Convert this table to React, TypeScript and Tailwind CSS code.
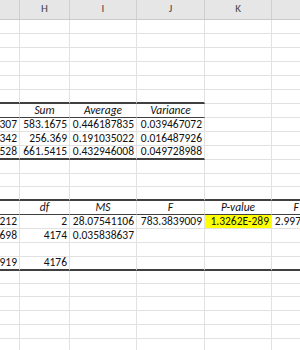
import React from "react";

const WC = ["w-[20px]", "w-[50px]", "w-[67px]", "w-[68px]", "w-[67px]", "w-[67px]"];
const LIGHT = "border-b border-b-[#e1e1e1]";
const THICK = "border-b-2 border-b-[#404040]";
const THIN = "border-b border-b-[#404040]";

type Cell = { t?: string; c?: boolean; i?: boolean; y?: boolean };

function Row({ h, cells, b }: { h: string; cells: Cell[]; b: string[] }) {
  return (
    <div className={`flex shrink-0 ${h}`}>
      {WC.map((w, idx) => {
        const cell = cells[idx] || {};
        return (
          <div
            key={idx}
            className={`${w} shrink-0 box-border whitespace-nowrap border-r border-r-[#e1e1e1] flex items-center px-[2px] leading-none ${b[idx]} ${cell.c ? "justify-center" : "justify-end"} ${cell.i ? "italic" : ""} ${cell.y ? "bg-[#ffff00]" : ""}`}
          >
            {cell.t}
          </div>
        );
      })}
    </div>
  );
}

const all = (s: string) => WC.map(() => s);
const first4 = (s: string) => WC.map((_, i) => (i < 4 ? s : LIGHT));

const H14 = "h-[14px]";
const H13 = "h-[13px]";

export default function App() {
  const rows: { h: string; cells: Cell[]; b: string[] }[] = [
    { h: H14, cells: [], b: all(LIGHT) },
    { h: H14, cells: [], b: all(LIGHT) },
    { h: H14, cells: [], b: all(LIGHT) },
    { h: H14, cells: [], b: all(LIGHT) },
    { h: H14, cells: [], b: all(LIGHT) },
    { h: H14, cells: [], b: first4(THICK) },
    {
      h: H14,
      cells: [{}, { t: "Sum", c: true, i: true }, { t: "Average", c: true, i: true }, { t: "Variance", c: true, i: true }],
      b: first4(THIN),
    },
    { h: H14, cells: [{ t: "307" }, { t: "583.1675" }, { t: "0.446187835" }, { t: "0.039467072" }], b: all(LIGHT) },
    { h: H14, cells: [{ t: "342" }, { t: "256.369" }, { t: "0.191035022" }, { t: "0.016487926" }], b: all(LIGHT) },
    { h: H14, cells: [{ t: "528" }, { t: "661.5415" }, { t: "0.432946008" }, { t: "0.049728988" }], b: first4(THICK) },
    { h: H14, cells: [], b: all(LIGHT) },
    { h: H13, cells: [], b: all(LIGHT) },
    { h: H14, cells: [], b: all(THICK) },
    {
      h: H14,
      cells: [
        {},
        { t: "df", c: true, i: true },
        { t: "MS", c: true, i: true },
        { t: "F", c: true, i: true },
        { t: "P-value", c: true, i: true },
        { t: "F crit", c: true, i: true },
      ],
      b: all(THIN),
    },
    {
      h: H14,
      cells: [
        { t: "212" },
        { t: "2" },
        { t: "28.07541106" },
        { t: "783.3839009" },
        { t: "1.3262E-289", y: true },
        { t: "2.997195264" },
      ],
      b: all(LIGHT),
    },
    { h: H14, cells: [{ t: "698" }, { t: "4174" }, { t: "0.035838637" }], b: all(LIGHT) },
    { h: H14, cells: [], b: all(LIGHT) },
    { h: H14, cells: [{ t: "919" }, { t: "4176" }], b: all(THICK) },
    { h: H13, cells: [], b: all(LIGHT) },
    { h: H13, cells: [], b: all(LIGHT) },
    { h: H14, cells: [], b: all(LIGHT) },
    { h: H14, cells: [], b: all(LIGHT) },
    { h: H14, cells: [], b: all(LIGHT) },
    { h: H14, cells: [], b: all(LIGHT) },
  ];

  return (
    <div className="w-[300px] h-[350px] overflow-hidden bg-white text-[#111] text-[11.5px] flex flex-col font-['Carlito','Liberation_Sans',Arial,sans-serif]">
      <div className="flex shrink-0 h-[20px] bg-[#e6e6e6] border-b border-b-[#cacaca] box-border">
        {["", "H", "I", "J", "K", ""].map((l, i) => (
          <div
            key={i}
            className={`${WC[i]} shrink-0 box-border border-r border-r-[#cfcfcf] flex items-center justify-center text-[11px] text-[#444]`}
          >
            {l}
          </div>
        ))}
      </div>
      {rows.map((r, i) => (
        <Row key={i} h={r.h} cells={r.cells} b={r.b} />
      ))}
    </div>
  );
}
